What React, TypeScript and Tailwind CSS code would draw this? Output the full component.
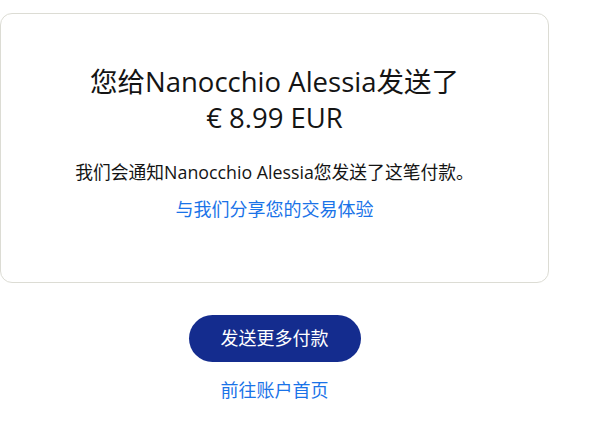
export default function App() {
  return (
    <div className="min-h-[426px] w-[616px] bg-white font-['Open_Sans','Noto_Sans_CJK_SC',sans-serif] text-[#141414]">
      <div className="w-[549px] pt-[13px]">
        <div className="flex h-[270px] flex-col items-center rounded-xl border border-[#dcdcd4] bg-white pt-[50px]">
          <h1 className="text-center text-[27.5px] font-normal leading-[36px]">
            您给Nanocchio Alessia发送了
            <br />€ 8.99 EUR
          </h1>
          <p className="mt-[23px] text-center text-[17.8px] leading-[26px]">
            我们会通知Nanocchio Alessia您发送了这笔付款。
          </p>
          <a href="#" className="mt-[11px] text-[18px] leading-[26px] text-[#1a73e8]">
            与我们分享您的交易体验
          </a>
        </div>

        <div className="mt-[32px] flex flex-col items-center">
          <button
            type="button"
            className="h-[47px] w-[172px] rounded-full bg-[#142c8e] text-[18px] text-white"
          >
            发送更多付款
          </button>
          <a href="#" className="mt-[15px] text-[18px] leading-[26px] text-[#1a73e8]">
            前往账户首页
          </a>
        </div>
      </div>
    </div>
  );
}
